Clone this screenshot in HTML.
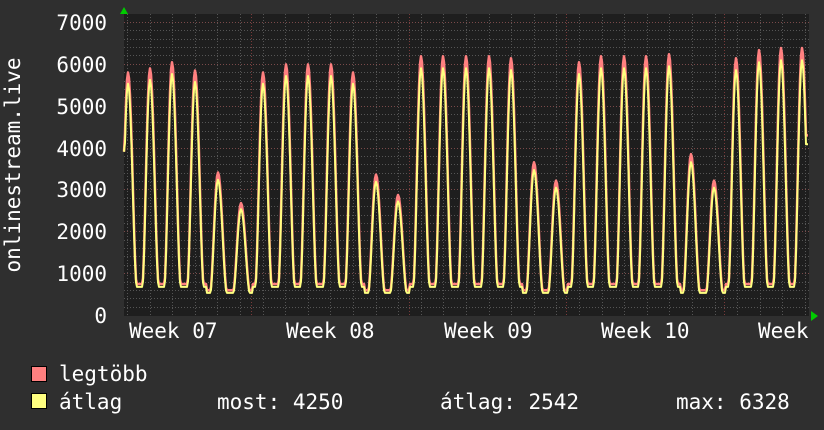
<!DOCTYPE html>
<html><head><meta charset="utf-8"><style>
html,body{margin:0;padding:0;background:#2f2f2f;width:824px;height:430px;overflow:hidden}
svg{display:block}
text{font-family:"DejaVu Sans Mono","Liberation Mono",monospace;font-size:21px;fill:#fff}
</style></head><body>
<svg id="g" width="824" height="430" xmlns="http://www.w3.org/2000/svg">
<rect x="0" y="0" width="824" height="430" fill="#2f2f2f"/>
<rect x="124" y="14" width="685" height="302" fill="#1e1e1e"/>
<g id="grid"></g>
<g id="data"></g>
<polygon points="120,14 128,14 124,7" fill="#00cc00"/>
<polygon points="811,311 811,321 818,316" fill="#00cc00"/>
<text x="107" y="30" text-anchor="end">7000</text>
<text x="107" y="72" text-anchor="end">6000</text>
<text x="107" y="114" text-anchor="end">5000</text>
<text x="107" y="156" text-anchor="end">4000</text>
<text x="107" y="197" text-anchor="end">3000</text>
<text x="107" y="239" text-anchor="end">2000</text>
<text x="107" y="281" text-anchor="end">1000</text>
<text x="107" y="323" text-anchor="end">0</text>
<text transform="translate(20,165) rotate(-90)" text-anchor="middle">onlinestream.live</text>
<text x="129" y="338">Week 07</text>
<text x="286" y="338">Week 08</text>
<text x="444" y="338">Week 09</text>
<text x="601" y="338">Week 10</text>
<text x="758" y="338">Week</text>
<rect x="31.5" y="366.5" width="15" height="15" fill="#ff8080" stroke="#000"/>
<rect x="31.5" y="393.5" width="15" height="15" fill="#ffff80" stroke="#000"/>
<text x="59" y="381">legtöbb</text>
<text x="59" y="409">átlag</text>
<text x="217" y="409">most: 4250</text>
<text x="440" y="409">átlag: 2542</text>
<text x="676" y="409">max: 6328</text>
</svg>
<script>
var NS="http://www.w3.org/2000/svg";
var g=document.getElementById('grid'),d=document.getElementById('data');
function ln(x1,y1,x2,y2,c,da){var l=document.createElementNS(NS,'line');l.setAttribute('x1',x1);l.setAttribute('y1',y1);l.setAttribute('x2',x2);l.setAttribute('y2',y2);l.setAttribute('stroke',c);l.setAttribute('stroke-width',1);if(da)l.setAttribute('stroke-dasharray',da);g.appendChild(l);}
function Y(v){return 315-v*0.04186;}
for(var v=200;v<=7000;v+=200){var y=Math.round(Y(v))+0.5;ln(124,y,809,y,v%1000==0?'#7a4a4a':'#555','1,2');}
for(var x=127;x<809;x+=22.6){var xx=Math.round(x)+0.5;ln(xx,14,xx,316,'#555','1,2');}
[251,409,566,724].forEach(function(x){ln(x+0.5,14,x+0.5,316,'#7a3a3a','1,2');});
var pk=[[128,5900],[150,6000],[172,6150],[195,5950],[218,3450],[241,2700],[263,5900],[286,6100],[308,6100],[331,6100],[353,5900],[376,3400],[398,2900],[421,6300],[443,6300],[466,6300],[489,6300],[511,6250],[534,3700],[556,3250],[579,6150],[601,6300],[624,6300],[646,6300],[669,6350],[691,3900],[714,3250],[736,6250],[759,6450],[781,6500],[802,6500]];
function val(x){var best=null;for(var i=0;i<pk.length;i++){if(Math.abs(pk[i][0]-x)<=11.3){best=pk[i];break;}}
if(!best){best=pk[pk.length-1];}
var dx=x-best[0];var mn=best[1]<4000?550:700;
var w=dx<0?7.5:8.5;
var t=Math.abs(dx)/w;if(t>1)t=1;
var f=0.5+0.5*Math.cos(t*Math.PI);
f=Math.pow(f,0.8);
return mn+(best[1]*0.975-mn)*f;}
var pr='',py='';
for(var x=125;x<=808;x++){var v=val(x);if(x>=806)v=4250;pr+='L'+x+','+Y(v+40).toFixed(1);py+='L'+x+','+Y(v*0.96).toFixed(1);}
pr='M124,'+Y(3900)+pr;py='M124,'+Y(3900)+py;
function p(dd,c,w){var e=document.createElementNS(NS,'path');e.setAttribute('d',dd);e.setAttribute('fill','none');e.setAttribute('stroke',c);e.setAttribute('stroke-width',w);e.setAttribute('stroke-linejoin','round');d.appendChild(e);}
p(pr,'#ff8080',2.5);p(py,'#ffff80',2);
</script>
</body></html>
